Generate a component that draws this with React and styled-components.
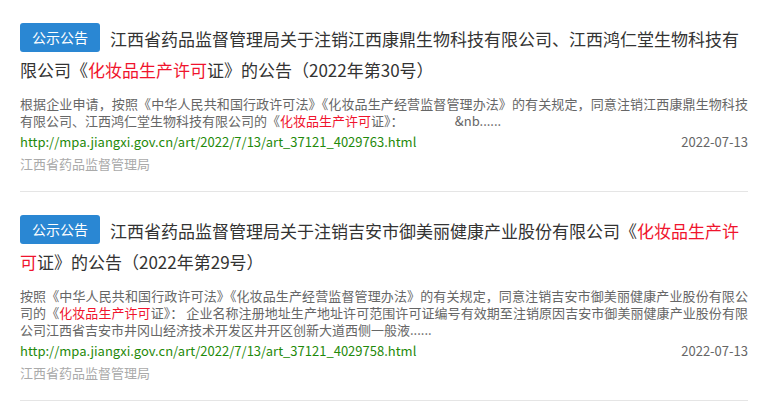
import styled, { createGlobalStyle } from 'styled-components'

const GlobalStyle = createGlobalStyle`
  body {
    margin: 0;
    background: #fff;
    font-family: "Noto Sans CJK SC", "Noto Sans", sans-serif;
  }
`

const List = styled.div`
  padding: 0 15px 0 20px;
`

const Item = styled.div`
  padding: 23px 0 17px;
  border-bottom: 1px solid #e5e5e5;
`

const Title = styled.div`
  font-size: 17px;
  line-height: 31px;
  color: #333;
`

const Badge = styled.span`
  display: inline-flex;
  align-items: center;
  justify-content: center;
  width: 80px;
  height: 29px;
  margin-right: 10px;
  vertical-align: top;
  background: #2a87d3;
  color: #fff;
  font-size: 14px;
  border-radius: 3px;
`

const Mark = styled.span`
  color: #f0142d;
`

const Desc = styled.div`
  margin-top: 10px;
  font-size: 13px;
  line-height: 17px;
  color: #666;
  text-align: justify;
`

const Meta = styled.div`
  display: flex;
  justify-content: space-between;
  margin-top: 3px;
  font-size: 13px;
  line-height: 20px;
`

const Url = styled.a`
  color: #1f8a0a;
  text-decoration: none;
`

const Date = styled.span`
  color: #666;
`

const Source = styled.div`
  margin-top: 2px;
  font-size: 13px;
  line-height: 20px;
  color: #aaa;
`

const items = [
  {
    id: 1,
    title: ['江西省药品监督管理局关于注销江西康鼎生物科技有限公司、江西鸿仁堂生物科技有限公司《', '》的公告（2022年第30号）'],
    desc: ['根据企业申请，按照《中华人民共和国行政许可法》《化妆品生产经营监督管理办法》的有关规定，同意注销江西康鼎生物科技有限公司、江西鸿仁堂生物科技有限公司的《', '证》：\u3000\u3000\u3000\u3000\u00a0\u00a0&nb......'],
    url: 'http://mpa.jiangxi.gov.cn/art/2022/7/13/art_37121_4029763.html',
    date: '2022-07-13'
  },
  {
    id: 2,
    title: ['江西省药品监督管理局关于注销吉安市御美丽健康产业股份有限公司《', '》的公告（2022年第29号）'],
    desc: ['按照《中华人民共和国行政许可法》《化妆品生产经营监督管理办法》的有关规定，同意注销吉安市御美丽健康产业股份有限公司的《', '证》： 企业名称注册地址生产地址许可范围许可证编号有效期至注销原因吉安市御美丽健康产业股份有限公司江西省吉安市井冈山经济技术开发区井开区创新大道西侧一般液......'],
    url: 'http://mpa.jiangxi.gov.cn/art/2022/7/13/art_37121_4029758.html',
    date: '2022-07-13'
  }
]

export default function App() {
  return (
    <>
      <GlobalStyle />
      <List>
        {items.map(iter => (
          <Item key={iter.id}>
            <Title>
              <Badge>公示公告</Badge>
              {iter.title[0]}<Mark>化妆品生产许可</Mark>证{iter.title[1]}
            </Title>
            <Desc>
              {iter.desc[0]}<Mark>化妆品生产许可</Mark>{iter.desc[1]}
            </Desc>
            <Meta>
              <Url href="#">{iter.url}</Url>
              <Date>{iter.date}</Date>
            </Meta>
            <Source>江西省药品监督管理局</Source>
          </Item>
        ))}
      </List>
    </>
  )
}
